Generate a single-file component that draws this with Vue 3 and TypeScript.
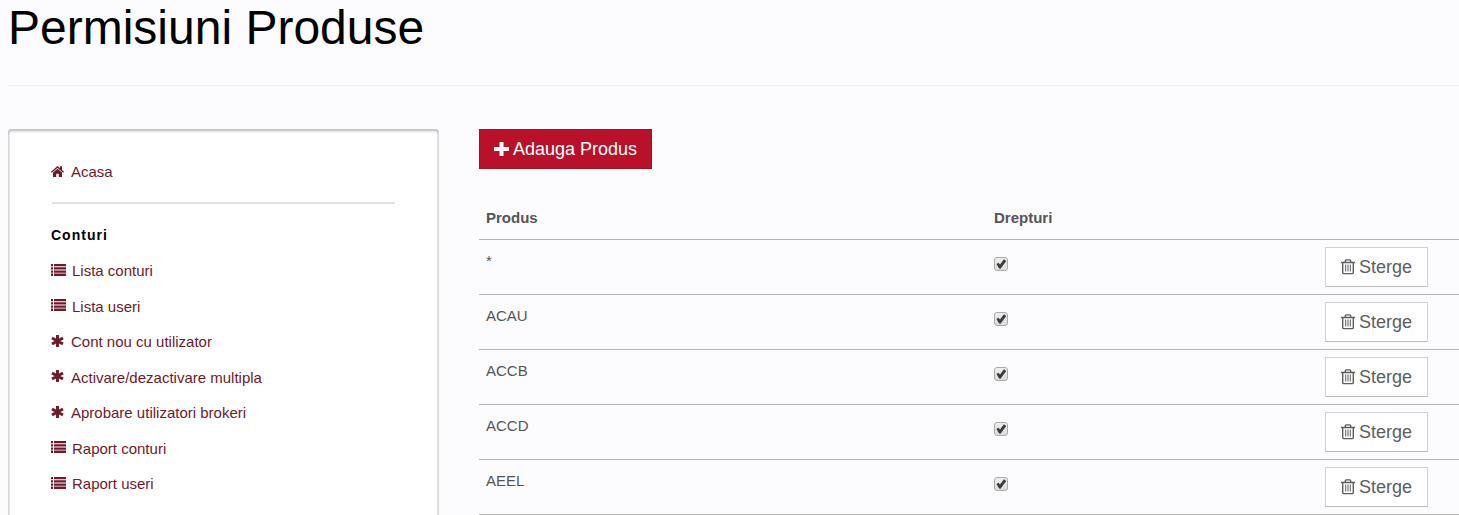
<script setup lang="ts">
import { ref } from 'vue'

type IconName = 'list' | 'asterisk'

interface MenuItem {
  label: string
  icon: IconName
}

interface Product {
  name: string
  allowed: boolean
}

const menu: MenuItem[] = [
  { label: 'Lista conturi', icon: 'list' },
  { label: 'Lista useri', icon: 'list' },
  { label: 'Cont nou cu utilizator', icon: 'asterisk' },
  { label: 'Activare/dezactivare multipla', icon: 'asterisk' },
  { label: 'Aprobare utilizatori brokeri', icon: 'asterisk' },
  { label: 'Raport conturi', icon: 'list' },
  { label: 'Raport useri', icon: 'list' },
]

const products = ref<Product[]>([
  { name: '*', allowed: true },
  { name: 'ACAU', allowed: true },
  { name: 'ACCB', allowed: true },
  { name: 'ACCD', allowed: true },
  { name: 'AEEL', allowed: true },
])

function removeProduct(index: number): void {
  products.value.splice(index, 1)
}
</script>

<template>
  <div class="page">
    <header class="page-header">
      <h1>Permisiuni Produse</h1>
    </header>

    <div class="layout">
      <nav class="sidebar" aria-label="Meniu">
        <a href="#" class="menu-link home-link">
          <svg class="icon-home" viewBox="0 0 14 13" aria-hidden="true">
            <path d="M0.4 6.3 6.5 1 12.6 6.3" fill="none" stroke="currentColor" stroke-width="1.4" />
            <path d="M9 0.3h2v4.5l-2-1.7z" fill="currentColor" />
            <path d="M6.5 2.8 11 6.6V11H7.8V7.8H5.2V11H2V6.6z" fill="currentColor" />
          </svg>
          <span>Acasa</span>
        </a>
        <hr class="divider" />
        <h2>Conturi</h2>
        <ul class="menu">
          <li v-for="item in menu" :key="item.label">
            <a href="#" class="menu-link">
              <svg v-if="item.icon === 'list'" class="icon-list" viewBox="0 0 15 14" aria-hidden="true">
                <path
                  d="M0 0h2v2.3H0zM3 0h12v2.3H3zM0 3.2h2v2.3H0zM3 3.2h12v2.3H3zM0 6.4h2v2.3H0zM3 6.4h12v2.3H3zM0 9.6h2V12H0zM3 9.6h12V12H3z"
                  fill="currentColor"
                />
              </svg>
              <svg v-else class="icon-star" viewBox="0 0 14 14" aria-hidden="true">
                <path
                  d="M6.5 0v12M1 2.9l11 6.2M12 2.9 1 9.1"
                  fill="none"
                  stroke="currentColor"
                  stroke-width="2.9"
                />
              </svg>
              <span>{{ item.label }}</span>
            </a>
          </li>
        </ul>
      </nav>

      <main class="content">
        <button type="button" class="btn btn-primary">
          <svg class="icon-plus" viewBox="0 0 15 15" aria-hidden="true">
            <path d="M5.5 0h4v5H15v4H9.5v5h-4V9H0V5h5.5z" fill="currentColor" />
          </svg>
          <span>Adauga Produs</span>
        </button>

        <table>
          <thead>
            <tr>
              <th scope="col">Produs</th>
              <th class="col-rights" scope="col">Drepturi</th>
              <th class="col-actions" aria-label="Actiuni"></th>
            </tr>
          </thead>
          <tbody>
            <tr v-for="(product, index) in products" :key="product.name">
              <td class="product-name">{{ product.name }}</td>
              <td>
                <input v-model="product.allowed" type="checkbox" :aria-label="product.name" />
              </td>
              <td>
                <button type="button" class="btn btn-default" @click="removeProduct(index)">
                  <svg class="icon-trash" viewBox="0 0 14 16" aria-hidden="true">
                    <path
                      d="M0 3.5h14M4.3 3V1.9q0-1 1-1h3.4q1 0 1 1V3M1.7 4v9.4q0 1.2 1.2 1.2h8.2q1.2 0 1.2-1.2V4"
                      fill="none"
                      stroke="currentColor"
                      stroke-width="1.4"
                    />
                    <path
                      d="M4.7 5.5v7M7 5.5v7M9.3 5.5v7"
                      fill="none"
                      stroke="currentColor"
                      stroke-width="1"
                    />
                  </svg>
                  <span>Sterge</span>
                </button>
              </td>
            </tr>
          </tbody>
        </table>
      </main>
    </div>
  </div>
</template>

<style>
body {
  background: #fcfcff;
  overflow: hidden;
}
</style>

<style scoped>
.page {
  padding-left: 8px;
  color: #555;
  font: 15px/20px "Liberation Sans", Arial, sans-serif;
}

.page-header {
  margin-bottom: 43px;
  padding-bottom: 29px;
  border-bottom: 1px solid #eee;
}

h1 {
  margin: 0;
  color: #000;
  font-size: 48px;
  font-weight: 400;
  line-height: 56px;
}

.layout {
  display: grid;
  grid-template-columns: minmax(240px, 431px) minmax(0, 980px);
  gap: 40px;
}

.sidebar {
  box-sizing: border-box;
  padding: 30px 44px 20px 43px;
  border-radius: 4px;
  background: #fff;
  box-shadow: inset 0 2px 3px #bebebe, inset 0 0 0 2px #e8e8ea;
}

.menu-link {
  display: flex;
  align-items: center;
  gap: 6px;
  color: #6e1a2a;
  text-decoration: none;
}

.home-link {
  line-height: 26px;
}

svg {
  flex: none;
}

.icon-home {
  width: 14px;
  height: 13px;
}

.icon-list {
  width: 15px;
  height: 14px;
}

.icon-star {
  width: 14px;
  height: 14px;
}

.divider {
  height: 2px;
  margin: 17px 0 20px 1px;
  border: 0;
  background: #e2e2e2;
}

h2 {
  margin: 0 0 7px;
  color: #000;
  font-size: 14px;
  line-height: 22px;
  letter-spacing: 1px;
}

.menu {
  margin: 0;
  padding: 0;
  list-style: none;
  line-height: 1.7;
}

.menu li {
  padding: 5px 0;
}

.btn {
  display: inline-flex;
  align-items: center;
  gap: 4px;
  box-sizing: border-box;
  height: 40px;
  padding: 0 15px;
  border: 1px solid;
  font: 18px/24px "Liberation Sans", Arial, sans-serif;
  white-space: nowrap;
  cursor: pointer;
}

.btn-primary {
  padding: 0 14px;
  border-color: #9c1226;
  background: #b81129;
  color: #fff;
}

.btn-default {
  border-color: #d2d2d2 #d2d2d2 #bbb;
  background: #fff;
  color: #5d5d5d;
}

.icon-plus {
  width: 15px;
  height: 15px;
}

.icon-trash {
  width: 14px;
  height: 16px;
}

.content {
  display: flex;
  flex-direction: column;
  align-items: flex-start;
  gap: 32px;
}

table {
  width: 100%;
  border-collapse: separate;
  border-spacing: 0;
  table-layout: fixed;
}

th,
td {
  box-sizing: border-box;
  padding: 7px;
  border-bottom: 1px solid #b3b3b3;
  text-align: left;
  vertical-align: top;
}

th {
  padding-bottom: 11px;
}

.product-name {
  padding-top: 11px;
}

td .btn {
  vertical-align: top;
}

.col-rights {
  width: 331px;
}

.col-actions {
  width: 141px;
}

input[type='checkbox'] {
  appearance: none;
  display: block;
  width: 14px;
  height: 14px;
  margin: 10px 0 0;
  border: 1px solid #aaa;
  border-radius: 3px;
  background: linear-gradient(#eee, #dcdcdc);
}

input[type='checkbox']:checked::before {
  content: '';
  display: block;
  width: 12px;
  height: 12px;
  background: #3c3c3c;
  clip-path: polygon(12% 50%, 28% 40%, 42% 55%, 74% 10%, 94% 24%, 46% 90%, 34% 88%);
}
</style>
